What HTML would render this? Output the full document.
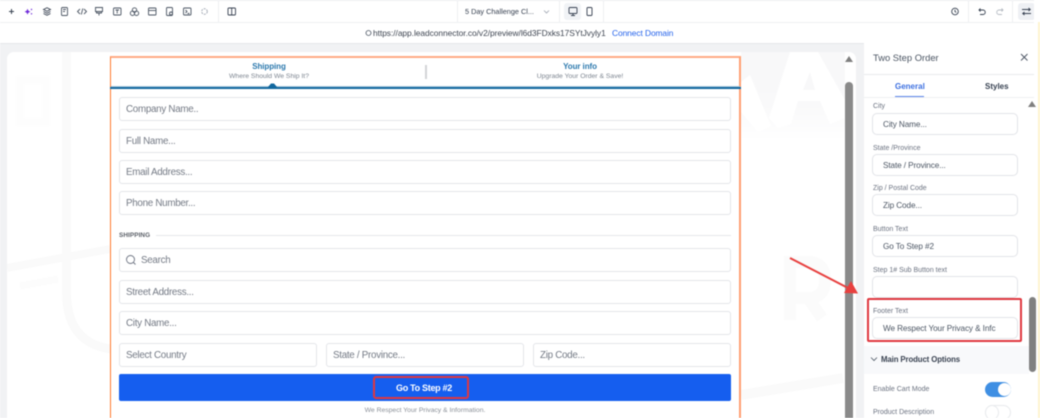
<!DOCTYPE html>
<html><head><meta charset="utf-8"><style>
*{box-sizing:border-box}
html,body{margin:0;padding:0;width:1040px;height:418px;overflow:hidden;background:#fff;font-family:"Liberation Sans",sans-serif}
#w{position:relative;width:1040px;height:418px;overflow:hidden;filter:blur(.4px)}
.a{position:absolute}
.f{position:absolute;height:24px;background:#fff;border:1px solid #e3e5e9;border-radius:3px;font-size:9.800px;line-height:24px;color:#747a85;padding-left:6px;letter-spacing:-.28px;white-space:nowrap}
.l{position:absolute;left:873px;font-size:7px;color:#6b7280;white-space:nowrap}
.p{position:absolute;left:872px;width:146px;height:22px;background:#fff;border:1px solid #e2e4e8;border-radius:5px;font-size:8.200px;line-height:22px;color:#4b5563;padding-left:10px;letter-spacing:-.1px;white-space:nowrap;overflow:hidden}
svg{position:absolute;overflow:visible}
</style></head><body><div id="w">

<!-- top bars -->
<div class="a" style="left:0;top:0;width:1040px;height:1px;background:#eceef0"></div>
<div class="a" style="left:0;top:22px;width:1040px;height:1px;background:#eef0f2"></div>
<div class="a" style="left:218px;top:0;width:1px;height:22px;background:#eef0f2"></div>
<div class="a" style="left:457px;top:0;width:1px;height:22px;background:#eef0f2"></div>
<div class="a" style="left:559px;top:0;width:1px;height:22px;background:#eef0f2"></div>
<div class="a" style="left:603px;top:0;width:1px;height:22px;background:#eef0f2"></div>
<div class="a" style="left:968px;top:0;width:1px;height:22px;background:#eef0f2"></div>
<div class="a" style="left:1012px;top:0;width:1px;height:22px;background:#eef0f2"></div>

<svg style="left:0;top:0" width="240" height="22" fill="none" stroke="#4b5563" stroke-width=".9">
<path d="M9 11.500h5M11.500 9v5" stroke="#374151" stroke-width="1"/>
<path d="M27.500 8.800l.9 2 2 .9-2 .9-.9 2-.9-2-2-.9 2-.9z" fill="#6d28d9" stroke="none"/>
<circle cx="31.500" cy="9.500" r=".7" fill="#6d28d9" stroke="none"/><circle cx="31.500" cy="13.800" r=".7" fill="#6d28d9" stroke="none"/>
<path d="M43.500 9.500l3.500-1.800 3.500 1.800-3.500 1.800zM43.500 11.500l3.500 1.800 3.500-1.800M43.500 13.500l3.500 1.800 3.500-1.800" stroke="#374151"/>
<rect x="61.500" y="7.500" width="6" height="8" rx="1"/><path d="M63 9.500h3M63 11.500h2"/>
<path d="M80 9l-2.500 2.500 2.500 2.500M84 9l2.500 2.500L84 14M82.800 8.500l-1.500 6"/>
<path d="M95.500 7.500h7v4h-7zM96.500 11.500v1.500h5v-1.500M99 13v2.500"/>
<rect x="113.500" y="8" width="7.500" height="7" rx="1"/><path d="M115.500 10h3.500M117.200 10v3.500"/>
<circle cx="134.500" cy="10" r="2.200"/><circle cx="132.500" cy="13.300" r="2.200"/><circle cx="136.500" cy="13.300" r="2.200"/>
<rect x="148.500" y="8" width="7.500" height="7" rx=".8"/><path d="M148.500 10.500h7.500"/>
<rect x="166.500" y="7.500" width="6" height="8" rx="1"/><circle cx="171" cy="13.500" r="1.500"/>
<rect x="183.500" y="8" width="7.500" height="7" rx="1"/><path d="M185.500 10l1.500 1.500-1.500 1.500M187.500 13.500h2"/>
<circle cx="204.500" cy="11.500" r="2.800" stroke="#9ca3af" stroke-dasharray="2 1"/>
<rect x="228" y="8" width="7.500" height="7" rx="1" stroke="#374151"/><path d="M231.700 8v7" stroke="#374151"/>
</svg>

<div class="a" style="left:465px;top:7px;font-size:7.300px;color:#374151;white-space:nowrap">5 Day Challenge Cl...</div>
<svg style="left:543px;top:9px" width="8" height="6" fill="none" stroke="#9ca3af" stroke-width=".8"><path d="M1 1.500l2.500 2.500L6 1.500"/></svg>
<div class="a" style="left:564px;top:3px;width:17px;height:17px;background:#f1f3f6;border-radius:3px"></div>
<svg style="left:560px;top:0" width="40" height="22" fill="none" stroke="#374151" stroke-width=".9"><rect x="9" y="7.500" width="8" height="6" rx="1"/><path d="M11 15.500h4M13 13.500v2"/><rect x="27" y="7.500" width="5" height="8" rx="1"/></svg>

<svg style="left:945px;top:0" width="95" height="22" fill="none" stroke="#4b5563" stroke-width=".9">
<circle cx="10" cy="11.500" r="3.300" stroke="#374151"/><path d="M10 9.800v1.800l1.300.8" stroke="#374151"/>
<path d="M34 10h4a2 2 0 0 1 0 4.500h-3M35.500 8.500L34 10l1.500 1.500" stroke="#374151"/>
<path d="M58 10h-4a2 2 0 0 0 0 4.500h3M56.500 8.500L58 10l-1.500 1.500" stroke="#b6bbc3"/>
</svg>
<div class="a" style="left:1018px;top:3px;width:17px;height:17px;background:#eef0f4;border-radius:3px"></div>
<svg style="left:1018px;top:3px" width="17" height="17" fill="none" stroke="#374151" stroke-width=".9"><path d="M4 6.500h8M10.500 5l1.800 1.500-1.800 1.500M13 10.500H5M6.500 9L4.700 10.500 6.500 12"/></svg>

<!-- url row -->
<svg style="left:365px;top:29px" width="8" height="8" fill="none" stroke="#4b5563" stroke-width=".8"><circle cx="3.500" cy="4" r="2.500"/></svg>
<div class="a" style="left:373px;top:28px;font-size:8.400px;color:#3f4652;letter-spacing:-.04px;white-space:nowrap">https://app.leadconnector.co/v2/preview/l6d3FDxks17SYtJvyly1</div>
<div class="a" style="left:612px;top:28px;font-size:8.400px;color:#2563eb;letter-spacing:-.07px;white-space:nowrap">Connect Domain</div>

<!-- canvas -->
<div class="a" style="left:0;top:43px;width:864px;height:375px;background:#f1f2f4;border-top:1px solid #e6e8eb"></div>
<div class="a" style="left:7px;top:52px;width:849px;height:366px;background:#fff;border-radius:7px 7px 0 0;overflow:hidden">
<svg style="left:-7px;top:-52px" width="864" height="418" fill="none">
<defs><linearGradient id="g" x1="0" y1="0" x2="0" y2="1"><stop offset="0" stop-color="#f8f8f9"/><stop offset=".6" stop-color="#f9f9fa"/><stop offset="1" stop-color="#fff"/></linearGradient></defs>
<!-- left watermark -->
<path d="M66.500 52v240q0 58 58 58h20" stroke="#fafafa" stroke-width="9"/>
<path d="M7 268L110 249" stroke="#fafafa" stroke-width="8"/>
<path d="M20 286l38-7" stroke="#fcfcfc" stroke-width="7"/>
<rect x="20" y="80" width="26" height="42" stroke="#fdfdfd" stroke-width="8"/>
<!-- right watermark -->
<rect x="741" y="52" width="104" height="88" fill="url(#g)"/>
<path d="M790 52L769 118 778 128 791 124 798 101 820 101 830 124 845 118 845 100 818 52z" fill="#fff"/>
<path d="M803 90L810 72 815 90z" fill="#f8f8f9"/>
<path d="M741 112L758 132 771 126 750 75 741 82z" fill="#fff"/>
<path d="M790 320V262h18q17 0 17 18t-17 18h-18M808 298l14 20" stroke="#fbfbfb" stroke-width="12"/>
<path d="M741 395l102-17" stroke="#fafafa" stroke-width="10"/>
</svg>
</div>

<!-- canvas scrollbar -->
<svg style="left:844px;top:54px" width="10" height="8"><path d="M1 8L5 2 9 8z" fill="#7f7f7f"/></svg>
<div class="a" style="left:845px;top:82px;width:8px;height:336px;background:#8a8a8a;border-radius:4px 4px 0 0"></div>

<!-- form box -->
<div class="a" style="left:110px;top:56px;width:631px;height:362px;background:#fff;border:1px solid #ff7a2e;border-top:2px solid #ffab85;border-right:2px solid #ff9f72;border-bottom:none"></div>
<div class="a" style="left:110px;top:87px;width:631px;height:2px;background:#12689f"></div>
<div class="a" style="left:111px;top:86px;width:629px;height:1px;background:#aac9dc"></div>
<svg style="left:268px;top:82px" width="10" height="6"><path d="M0 5L3 1.500h3L9 5z" fill="#12689f"/></svg>
<div class="a" style="left:111px;top:62px;width:316px;text-align:center;font-size:8px;font-weight:bold;color:#2b78ad;letter-spacing:-.08px">Shipping</div>
<div class="a" style="left:111px;top:73px;width:316px;text-align:center;font-size:6.800px;color:#7d8590">Where Should We Ship It?</div>
<div class="a" style="left:425px;top:65px;width:2px;height:14px;background:#d2d4d7"></div>
<div class="a" style="left:427px;top:62px;width:306px;text-align:center;font-size:8px;font-weight:bold;color:#2b78ad;letter-spacing:-.08px">Your info</div>
<div class="a" style="left:427px;top:73px;width:306px;text-align:center;font-size:6.800px;color:#7d8590">Upgrade Your Order &amp; Save!</div>

<div class="f" style="left:119px;top:97px;width:612px">Company Name..</div>
<div class="f" style="left:119px;top:129px;width:612px">Full Name...</div>
<div class="f" style="left:119px;top:160px;width:612px">Email Address...</div>
<div class="f" style="left:119px;top:191px;width:612px">Phone Number...</div>

<div class="a" style="left:119px;top:232px;font-size:6.400px;font-weight:bold;color:#5b6068;letter-spacing:.08px">SHIPPING</div>
<div class="a" style="left:156px;top:235px;width:575px;height:1px;background:#e5e7ea"></div>

<div class="f" style="left:119px;top:248px;width:612px;padding-left:21px">Search</div>
<svg style="left:125px;top:254px" width="12" height="12" fill="none" stroke="#6b7280" stroke-width=".9"><circle cx="5.500" cy="5.500" r="4"/><path d="M8.500 8.500l2 2"/></svg>
<div class="f" style="left:119px;top:280px;width:612px">Street Address...</div>
<div class="f" style="left:119px;top:311px;width:612px">City Name...</div>
<div class="f" style="left:119px;top:343px;width:198px">Select Country</div>
<div class="f" style="left:326px;top:343px;width:198px">State / Province...</div>
<div class="f" style="left:533px;top:343px;width:198px">Zip Code...</div>

<div class="a" style="left:119px;top:374px;width:612px;height:27px;background:#155eef;border-radius:2px"></div>
<div class="a" style="left:373px;top:376px;width:96px;height:23px;border:2px solid #e0373f;border-radius:3px"></div>
<div class="a" style="left:118px;top:383px;width:612px;text-align:center;font-size:9px;font-weight:bold;color:#fff;letter-spacing:-.3px">Go To Step #2</div>
<div class="a" style="left:119px;top:407px;width:612px;text-align:center;font-size:6.800px;color:#8b9098">We Respect Your Privacy &amp; Information.</div>

<!-- right panel -->
<div class="a" style="left:864px;top:44px;width:170px;height:374px;background:#fff"></div>
<div class="a" style="left:1034px;top:0;width:6px;height:418px;background:#fff"></div>
<div class="a" style="left:1038px;top:22px;width:2px;height:396px;background:#fdf3cf"></div>

<!-- arrow -->
<svg style="left:780px;top:250px" width="90" height="50" fill="none"><path d="M10 8L70 39" stroke="#e8403f" stroke-width="2"/><path d="M78 43.500L64 43 71 31z" fill="#e8403f"/></svg>

<div class="a" style="left:873px;top:52px;font-size:9.400px;color:#4b5563">Two Step Order</div>
<svg style="left:1020px;top:53px" width="9" height="9" fill="none" stroke="#4b5563" stroke-width=".9"><path d="M1 1l6.500 6.500M7.500 1L1 7.500"/></svg>
<div class="a" style="left:864px;top:74px;width:170px;height:1px;background:#e8eaed"></div>
<div class="a" style="left:895px;top:82px;font-size:8px;font-weight:bold;color:#3b6fe0">General</div>
<div class="a" style="left:985px;top:82px;font-size:8px;font-weight:bold;color:#374151">Styles</div>
<div class="a" style="left:895px;top:96px;width:29px;height:1px;background:#5b84ea"></div>
<div class="a" style="left:864px;top:97px;width:170px;height:1px;background:#eef0f2"></div>

<svg style="left:1027px;top:99px" width="10" height="8"><path d="M1 8L5 2 9 8z" fill="#7f7f7f"/></svg>
<div class="a" style="left:1029px;top:297px;width:7px;height:75px;background:#808080;border-radius:3.500px"></div>

<div class="l" style="top:103px">City</div>
<div class="p" style="left:872px;top:113px">City Name...</div>
<div class="l" style="top:145px">State /Province</div>
<div class="p" style="top:154px">State / Province...</div>
<div class="l" style="top:185px">Zip / Postal Code</div>
<div class="p" style="top:194px">Zip Code...</div>
<div class="l" style="top:226px">Button Text</div>
<div class="p" style="top:235px">Go To Step #2</div>
<div class="l" style="top:267px">Step 1# Sub Button text</div>
<div class="p" style="top:276px"></div>
<div class="l" style="top:308px">Footer Text</div>
<div class="p" style="top:317px">We Respect Your Privacy &amp; Infc</div>
<div class="a" style="left:867px;top:298px;width:155px;height:44px;border:2px solid #e0373f;border-radius:2px"></div>

<div class="a" style="left:864px;top:346px;width:165px;height:28px;background:#f8f9fb"></div>
<svg style="left:870px;top:356px" width="9" height="7" fill="none" stroke="#4b5563" stroke-width=".8"><path d="M1 1.500l3 3 3-3"/></svg>
<div class="a" style="left:881px;top:355px;font-size:7.800px;font-weight:bold;color:#3a4352;letter-spacing:-.1px">Main Product Options</div>

<div class="l" style="top:386px">Enable Cart Mode</div>
<div class="a" style="left:985px;top:382px;width:26px;height:15px;background:#3f8fe3;border-radius:8px"></div>
<div class="a" style="left:998px;top:383px;width:13px;height:13px;background:#fff;border-radius:50%"></div>
<div class="l" style="top:409px">Product Description</div>
<div class="a" style="left:985px;top:405px;width:26px;height:15px;background:#fff;border:1px solid #e8eaed;border-radius:8px"></div>
<div class="a" style="left:985px;top:405px;width:14px;height:15px;background:#fff;border:1px solid #e8eaed;border-radius:50%"></div>

</div></body></html>
